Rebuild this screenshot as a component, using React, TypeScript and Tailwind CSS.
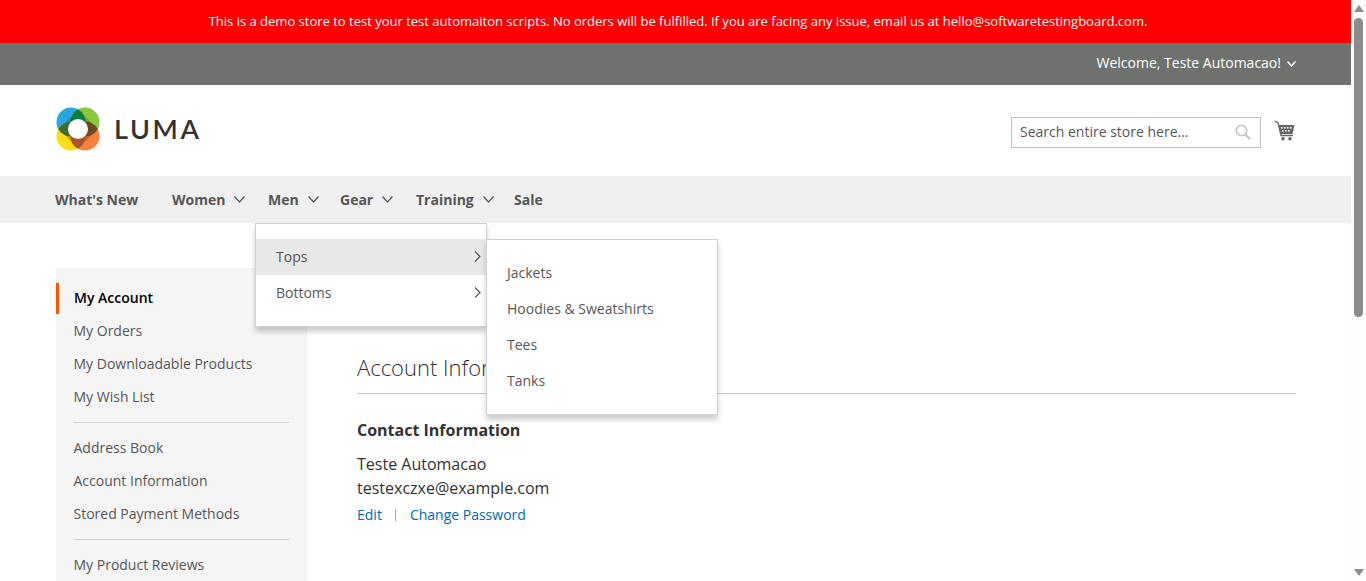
const font = "font-['Open_Sans',sans-serif]";

function Logo() {
  return (
    <svg width="44" height="44" viewBox="0 0 44 44">
      <defs>
        <clipPath id="blue"><circle cx="15" cy="15" r="14.5" /></clipPath>
        <clipPath id="green"><circle cx="29" cy="15" r="14.5" /></clipPath>
        <clipPath id="yellow"><circle cx="15" cy="29" r="14.5" /></clipPath>
        <clipPath id="orange"><circle cx="29" cy="29" r="14.5" /></clipPath>
      </defs>
      <circle cx="15" cy="15" r="14.5" fill="#27a8e0" />
      <circle cx="29" cy="15" r="14.5" fill="#8dc63f" />
      <circle cx="15" cy="29" r="14.5" fill="#ffdd15" />
      <circle cx="29" cy="29" r="14.5" fill="#f58040" />
      <circle cx="22" cy="22" r="14" fill="#000" opacity="0.2" />
      <circle cx="29" cy="15" r="14.5" fill="#0c7b3e" clipPath="url(#blue)" />
      <circle cx="15" cy="29" r="14.5" fill="#3f6b34" clipPath="url(#blue)" />
      <circle cx="29" cy="29" r="14.5" fill="#6b4a22" clipPath="url(#green)" />
      <circle cx="29" cy="29" r="14.5" fill="#a9532a" clipPath="url(#yellow)" />
      <circle cx="22" cy="22" r="10" fill="#fff" />
    </svg>
  );
}

function CartIcon() {
  return (
    <svg width="21" height="21" viewBox="0 0 21 21" fill="#666">
      <path d="M0.5 1 L4 2.8 L7 15.5 H19" fill="none" stroke="#666" strokeWidth="1.3" />
      <path d="M4.5 5 H20.5 L18.5 14 H7 Z" />
      <g fill="#fff">
        <rect x="7" y="7" width="1.6" height="1.6" />
        <rect x="10" y="7" width="1.6" height="1.6" />
        <rect x="13" y="7" width="1.6" height="1.6" />
        <rect x="16" y="7" width="1.6" height="1.6" />
        <rect x="8" y="10" width="1.6" height="1.6" />
        <rect x="11" y="10" width="1.6" height="1.6" />
        <rect x="14" y="10" width="1.6" height="1.6" />
      </g>
      <circle cx="9" cy="18.8" r="1.8" />
      <circle cx="16" cy="18.8" r="1.8" />
    </svg>
  );
}

function SearchIcon() {
  return (
    <svg width="16" height="16" viewBox="0 0 16 16" fill="none" stroke="#c2c2c2" strokeWidth="1.6">
      <circle cx="6.5" cy="6.5" r="5.2" />
      <path d="M10.5 10.5 L15.2 15.2" strokeWidth="2" />
    </svg>
  );
}

function Caret({ w, h, stroke, color }: { w: number; h: number; stroke: number; color: string }) {
  return (
    <svg width={w} height={h} viewBox={`0 0 ${w} ${h}`} fill="none" stroke={color} strokeWidth={stroke}>
      <path d={`M0.5 0.5 L${w / 2} ${h - 1} L${w - 0.5} 0.5`} />
    </svg>
  );
}

function MenuArrow() {
  return (
    <svg width="7" height="11" viewBox="0 0 7 11" fill="none" stroke="#575757" strokeWidth="1.2">
      <path d="M1 0.5 L6 5.5 L1 10.5" />
    </svg>
  );
}

function NavItem({ label, arrow = true, className = "" }: { label: string; arrow?: boolean; className?: string }) {
  return (
    <div className={`flex items-center ${className}`}>
      <span className="text-[14px] font-bold text-[#575757]">{label}</span>
      {arrow && (
        <span className="ml-[9px]">
          <Caret w={11} h={7} stroke={1.2} color="#575757" />
        </span>
      )}
    </div>
  );
}

function SideLink({ label }: { label: string }) {
  return <div className="h-[33px] pl-[17.5px] text-[14px] leading-[33px] text-[#575757]">{label}</div>;
}

function Divider() {
  return <div className="mx-[18px] mt-[9px] mb-[8px] h-px bg-[#d1d1d1]" />;
}

export default function App() {
  return (
    <div className={`flex h-[581px] w-[1366px] overflow-hidden bg-white ${font}`}>
      <div className="relative w-[1351px] shrink-0">
        <div className="flex h-[43px] items-center justify-center bg-[#ff0000] pl-[5px] text-[13px] text-white">
          This is a demo store to test your test automaiton scripts. No orders will be fulfilled. If you are facing any issue, email us at hello@softwaretestingboard.com.
        </div>
        <div className="flex h-[42px] items-center justify-end bg-[#6e716e] pr-[55px] pb-[3px] text-[14px] text-white">
          Welcome, Teste Automacao!
          <span className="ml-[6px] mt-[3px]">
            <Caret w={9} h={6} stroke={1.5} color="#fff" />
          </span>
        </div>

        <header className="flex h-[91px] items-center justify-between pl-[56px] pr-[55px]">
          <div className="mb-[3px] flex items-center">
            <Logo />
            <span className="ml-[14px] font-['Lato',sans-serif] text-[27px] font-semibold tracking-[2.6px] text-[#333]">LUMA</span>
          </div>
          <div className="flex items-center">
            <div className="mt-[3px] flex h-[31px] w-[250px] items-center justify-between border border-[#c2c2c2] pl-[8px] pr-[9px] text-[14px] text-[#575757]">
              <span className="mb-[2px]">Search entire store here...</span>
              <SearchIcon />
            </div>
            <div className="ml-[13px] mr-[1px]"><CartIcon /></div>
          </div>
        </header>

        <nav className="flex h-[47px] items-center bg-[#f0f0f0] pl-[55px]">
          <NavItem label="What's New" arrow={false} className="w-[117px]" />
          <NavItem label="Women" className="w-[96px]" />
          <NavItem label="Men" className="w-[72px]" />
          <NavItem label="Gear" className="w-[76px]" />
          <NavItem label="Training" className="w-[98px]" />
          <NavItem label="Sale" arrow={false} />
        </nav>

        <main className="flex pl-[56px] pt-[45px]">
          <aside className="h-[400px] w-[251px] shrink-0 bg-[#f5f5f5] pt-[15px]">
            <div className="h-[31px] border-l-[3px] border-[#ff5501] pl-[15px] text-[14px] font-semibold leading-[29px] text-black">My Account</div>
            <SideLink label="My Orders" />
            <SideLink label="My Downloadable Products" />
            <SideLink label="My Wish List" />
            <Divider />
            <SideLink label="Address Book" />
            <SideLink label="Account Information" />
            <SideLink label="Stored Payment Methods" />
            <Divider />
            <SideLink label="My Product Reviews" />
          </aside>
          <section className="ml-[50px] w-[939px] pt-[82px]">
            <div className="h-[44px] border-b border-[#c6c6c6] text-[22px] font-light leading-[34px] text-[#333]">Account Information</div>
            <div className="mt-[24px] text-[16px] font-bold leading-[24px] text-[#333]">Contact Information</div>
            <div className="mt-[10px] text-[16px] leading-[24px] text-[#333]">
              <div>Teste Automacao</div>
              <div>testexczxe@example.com</div>
            </div>
            <div className="mt-[3px] flex items-center text-[14px] leading-[24px] text-[#006bb4]">
              <span>Edit</span>
              <span className="ml-[13px] mr-[14px] h-[12px] w-px bg-[#a6a6a6]" />
              <span>Change Password</span>
            </div>
          </section>
        </main>

        {/* open menu */}
        <div className="absolute left-[255px] top-[223px] h-[104px] w-[232px] border border-[#d1d1d1] bg-white py-[15px] shadow-[0_5px_5px_rgba(0,0,0,0.19)]">
          <div className="flex h-[36px] items-center justify-between bg-[#e8e8e8] pb-[2px] pl-[20px] pr-[5px] text-[14px] text-[#575757]">
            Tops
            <MenuArrow />
          </div>
          <div className="flex h-[36px] items-center justify-between pb-[2px] pl-[20px] pr-[5px] text-[14px] text-[#575757]">
            Bottoms
            <MenuArrow />
          </div>
        </div>
        <div className="absolute left-[486px] top-[239px] h-[176px] w-[232px] border border-[#d1d1d1] bg-white py-[15px] shadow-[0_5px_5px_rgba(0,0,0,0.19)]">
          {["Jackets", "Hoodies & Sweatshirts", "Tees", "Tanks"].map((item) => (
            <div key={item} className="flex h-[36px] items-center pb-[2px] pl-[20px] text-[14px] text-[#575757]">
              {item}
            </div>
          ))}
        </div>
      </div>

      {/* scrollbar */}
      <div className="relative flex w-[15px] shrink-0 flex-col items-center bg-[#fdfdfd]">
        <div className="mt-[5px] h-0 w-0 border-x-[5px] border-b-[7px] border-x-transparent border-b-[#8c8c8c]" />
        <div className="mt-[6px] h-[299px] w-[9px] rounded-[5px] bg-[#8c8c8c]" />
        <div className="mt-auto mb-[5px] h-0 w-0 border-x-[5px] border-t-[7px] border-x-transparent border-t-[#8c8c8c]" />
      </div>
    </div>
  );
}
